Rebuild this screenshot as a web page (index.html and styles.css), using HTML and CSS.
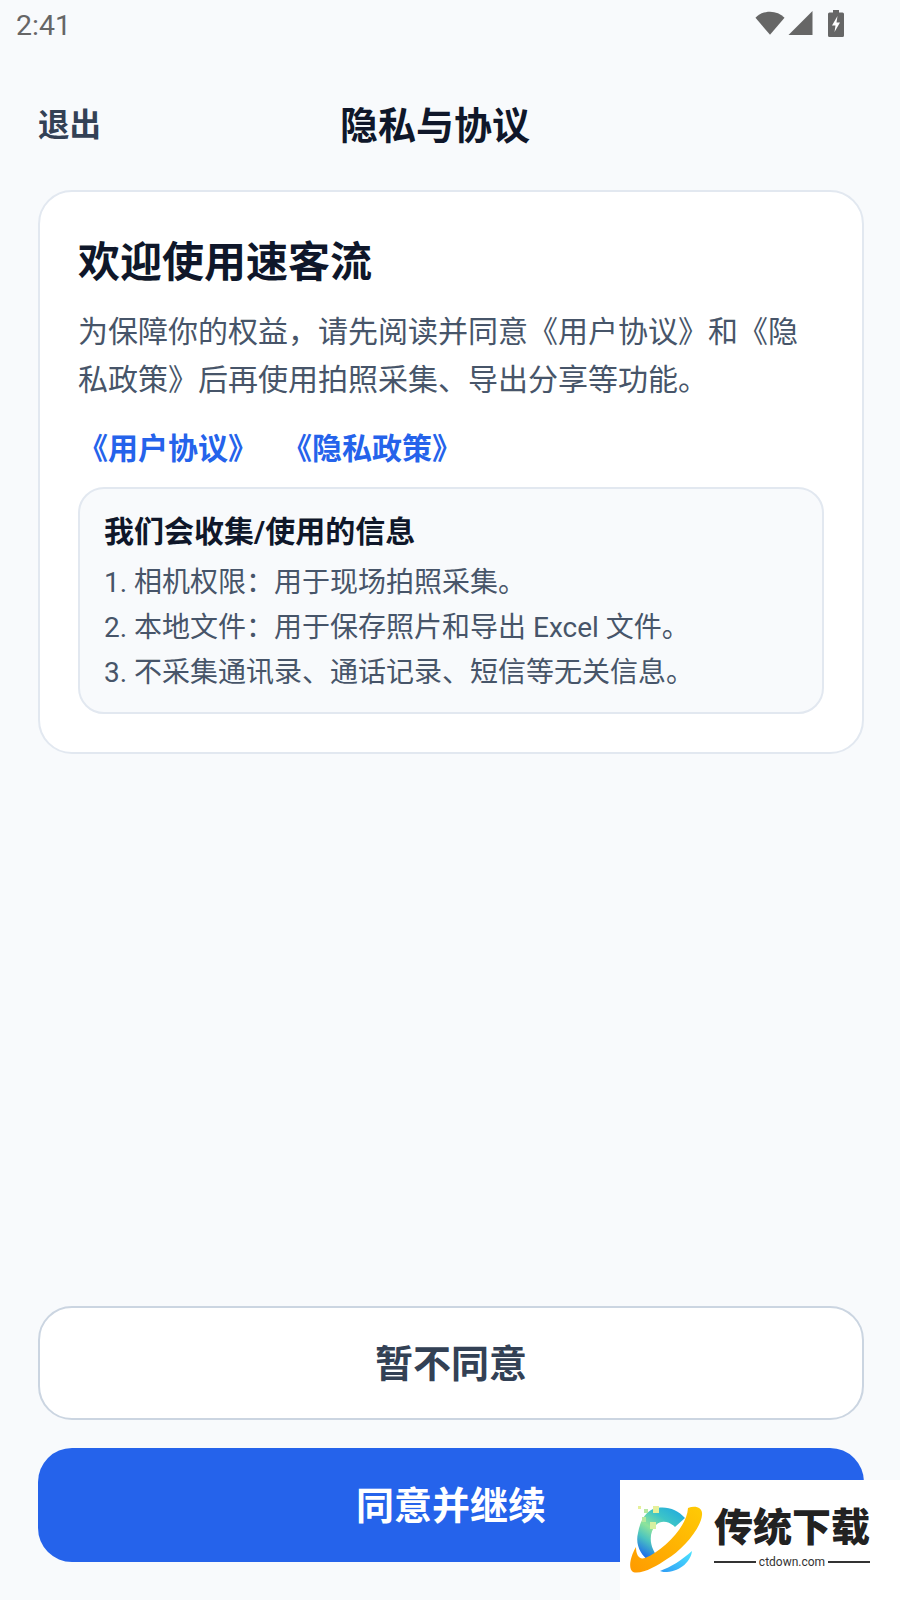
FILE: index.html
```html
<!DOCTYPE html>
<html lang="zh-CN">
<head>
    <meta charset="UTF-8">
    <meta name="viewport" content="width=device-width, initial-scale=1.0">
    <title>隐私与协议</title>
    <link rel="stylesheet" href="styles.css">
</head>
<body>
    <div class="screen">
        <div class="status-bar">
            <span class="status-time">2:41</span>
            <div class="status-icons">
                <svg class="icon-wifi" width="30" height="26" viewBox="0 0 32 26">
                    <path d="M0.5 7.5 C4.5 3.2 10 1 16 1 C22 1 27.5 3.2 31.5 7.5 L16 25.5 Z" fill="#666"/>
                </svg>
                <svg class="icon-signal" width="25" height="26" viewBox="0 0 26 26">
                    <path d="M0.5 25.5 L25.5 0.5 V25.5 Z" fill="#666"/>
                </svg>
                <svg class="icon-battery" width="16" height="27" viewBox="0 0 16 27">
                    <path d="M5 0 H11 V2.5 H14.5 Q16 2.5 16 4 V25.5 Q16 27 14.5 27 H1.5 Q0 27 0 25.5 V4 Q0 2.5 1.5 2.5 H5 Z" fill="#666"/>
                    <path d="M9.5 6 L4 15.5 H7.5 L6.5 22 L12 12.5 H8.5 Z" fill="#fff"/>
                </svg>
            </div>
        </div>

        <header class="top-bar">
            <button class="exit-button">退出</button>
            <h1>隐私与协议</h1>
        </header>

        <main class="content">
            <section class="card">
                <h2>欢迎使用速客流</h2>
                <p class="intro">为保障你的权益，请先阅读并同意《用户协议》和《隐私政策》后再使用拍照采集、导出分享等功能。</p>
                <div class="links">
                    <a href="#">《用户协议》</a>
                    <a href="#">《隐私政策》</a>
                </div>
                <div class="info-box">
                    <h3>我们会收集/使用的信息</h3>
                    <p>1. 相机权限：用于现场拍照采集。</p>
                    <p>2. 本地文件：用于保存照片和导出 Excel 文件。</p>
                    <p>3. 不采集通讯录、通话记录、短信等无关信息。</p>
                </div>
            </section>
        </main>

        <div class="actions">
            <button class="btn btn-outline">暂不同意</button>
            <button class="btn btn-primary">同意并继续</button>
        </div>

        <div class="watermark">
            <svg class="watermark-logo" width="76" height="72" viewBox="0 0 76 72">
                <defs>
                    <linearGradient id="ringGrad" x1="0" y1="1" x2="1" y2="0">
                        <stop offset="0" stop-color="#ff9a00"/>
                        <stop offset="1" stop-color="#ffcb05"/>
                    </linearGradient>
                    <linearGradient id="arcGrad" x1="0.9" y1="0" x2="0.3" y2="1">
                        <stop offset="0" stop-color="#1fa8e0"/>
                        <stop offset="0.3" stop-color="#3cc4c8"/>
                        <stop offset="0.55" stop-color="#8ee49a"/>
                        <stop offset="0.75" stop-color="#4cc4c0"/>
                        <stop offset="1" stop-color="#1f6fe8"/>
                    </linearGradient>
                    <linearGradient id="tailGrad" x1="0" y1="1" x2="1" y2="0">
                        <stop offset="0" stop-color="#2f9cf5"/>
                        <stop offset="1" stop-color="#4ce4ff"/>
                    </linearGradient>
                </defs>
                <path d="M24 4 C36 0 48 4 56 13 L46 22 C40 16 32 15 27 20 C19 28 20 44 31 54 L20 56 C12 50 6 40 9 28 C11 16 16 8 24 4 Z" fill="url(#arcGrad)"/>
                <path d="M59 3 C66 0 74 2 73 10 C72 24 52 46 38 54 C28 61 12 70 4 67 C-1 64 1 52 7 42 C7 50 10 55 16 53 C34 46 58 22 59 3 Z" fill="url(#ringGrad)"/>
                <path d="M63 46 C62 56 52 66 38 67 C36 67 33 67 31 66 C42 62 53 55 63 46 Z" fill="url(#tailGrad)"/>
                <rect x="9" y="1" width="3" height="3" fill="#e6f09a"/>
                <rect x="15" y="4" width="4" height="4" fill="#b6e8a0"/>
                <rect x="24" y="1" width="6" height="7" fill="#e6f09a"/>
                <rect x="13" y="12" width="4" height="5" fill="#b6e8a0"/>
                <rect x="21" y="17" width="6" height="7" fill="#d6f0a0"/>
            </svg>
            <div class="watermark-text">
                <div class="watermark-name">传统下载</div>
                <div class="watermark-url"><span class="rule"></span>ctdown.com<span class="rule"></span></div>
            </div>
        </div>
    </div>
</body>
</html>
```

FILE: styles.css
```css
* {
    box-sizing: border-box;
}

body {
    margin: 0;
    padding: 0;
    font-family: "Roboto", "Noto Sans CJK SC", sans-serif;
    background-color: #f8fafc;
}

.screen {
    position: relative;
    display: flex;
    flex-direction: column;
    height: 1600px;
    overflow: hidden;
    padding-bottom: 38px;
}

.status-bar {
    display: flex;
    justify-content: space-between;
    align-items: center;
    height: 50px;
    padding: 0 56px 0 16px;
}

.status-time {
    font-size: 28.5px;
    color: #666;
}

.status-icons {
    display: flex;
    align-items: flex-start;
    gap: 3px;
    padding-bottom: 4px;
}

.icon-battery {
    margin-left: 12px;
}

.top-bar {
    position: relative;
    display: flex;
    align-items: center;
    justify-content: center;
    height: 100px;
    margin-top: 22px;
    padding-right: 30px;
}

.top-bar h1 {
    margin: 0;
    font-size: 38px;
    font-weight: 700;
    color: #0f172a;
}

.exit-button {
    position: absolute;
    left: 38px;
    top: 50%;
    transform: translateY(-50%);
    padding: 0;
    border: none;
    background: none;
    font-family: inherit;
    font-size: 31.5px;
    font-weight: 700;
    color: #334155;
}

.content {
    flex: 1;
    padding: 18px 36px 0 38px;
}

.card {
    padding: 41px 38px 38px 38px;
    background-color: white;
    border: 2px solid #e2e8f0;
    border-radius: 34px;
}

.card h2 {
    margin: 0;
    font-size: 42px;
    line-height: 60px;
    font-weight: 700;
    color: #0f172a;
}

.intro {
    margin: 15px 0 0;
    font-size: 30px;
    line-height: 48px;
    color: #475569;
}

.links {
    display: flex;
    gap: 24px;
    margin-top: 21px;
}

.links a {
    font-size: 30px;
    line-height: 48px;
    font-weight: 700;
    color: #2563eb;
    text-decoration: none;
}

.info-box {
    margin-top: 14px;
    padding: 21px 24px 17px;
    background-color: #f8fafc;
    border: 2px solid #e2e8f0;
    border-radius: 26px;
}

.info-box h3 {
    margin: 0 0 6px;
    font-size: 30px;
    line-height: 44px;
    font-weight: 700;
    color: #0f172a;
}

.info-box p {
    margin: 0;
    font-size: 28px;
    line-height: 45px;
    color: #475569;
}

.actions {
    display: flex;
    flex-direction: column;
    gap: 28px;
    padding: 0 36px 0 38px;
}

.btn {
    height: 114px;
    padding-bottom: 6px;
    border-radius: 34px;
    font-family: inherit;
    font-size: 38px;
    font-weight: 700;
}

.btn-outline {
    background-color: white;
    border: 2px solid #cbd5e1;
    color: #334155;
}

.btn-primary {
    background-color: #2563eb;
    border: none;
    color: white;
}

.watermark {
    position: absolute;
    right: 0;
    bottom: 0;
    display: flex;
    width: 280px;
    height: 120px;
    padding: 25px 0 0 9px;
    gap: 9px;
    background-color: white;
}

.watermark-logo {
    flex-shrink: 0;
}

.watermark-text {
    width: 156px;
}

.watermark-name {
    font-size: 39px;
    line-height: 46px;
    font-weight: 900;
    color: #222;
    white-space: nowrap;
}

.watermark-url {
    display: flex;
    align-items: center;
    gap: 3px;
    margin-top: 4px;
    font-size: 12px;
    line-height: 14px;
    color: #333;
}

.rule {
    flex: 1;
    height: 2px;
    background-color: #333;
}
```
